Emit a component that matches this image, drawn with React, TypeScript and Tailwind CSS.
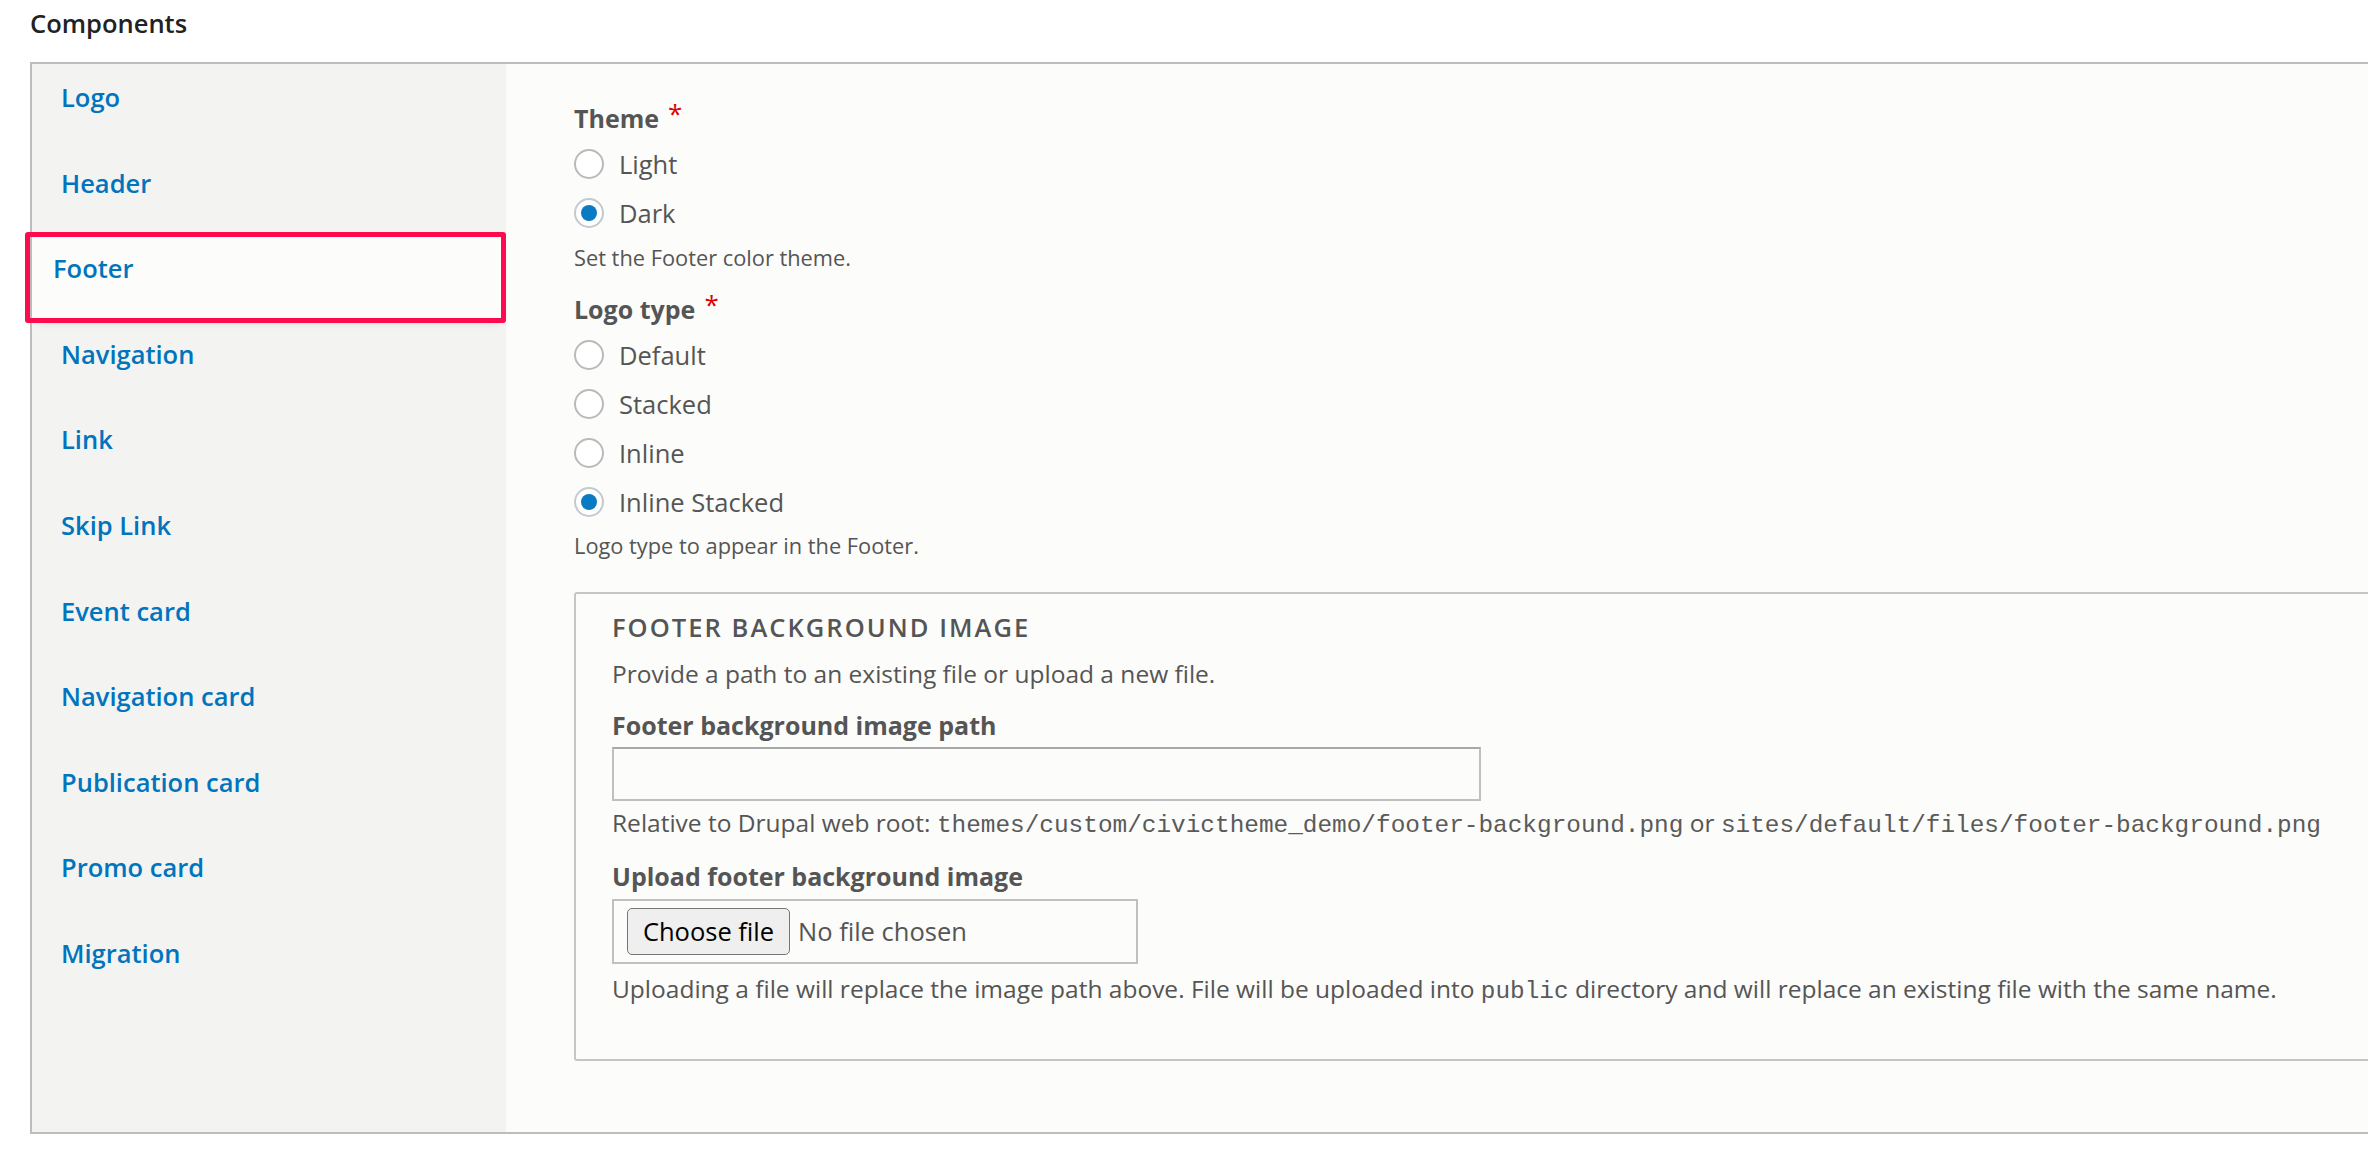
import type { ReactNode } from "react";

const tabs = [
  "Logo",
  "Header",
  "Footer",
  "Navigation",
  "Link",
  "Skip Link",
  "Event card",
  "Navigation card",
  "Publication card",
  "Promo card",
  "Migration",
];

const Radio = ({ checked, label }: { checked?: boolean; label: string }) => (
  <div className="flex h-[49px] items-center gap-[15px]">
    {checked ? (
      <span className="flex h-[30px] w-[30px] items-center justify-center rounded-full border-2 border-[#c3c9d0] bg-white">
        <span className="h-[16px] w-[16px] rounded-full bg-[#0a7bc2]" />
      </span>
    ) : (
      <span className="h-[30px] w-[30px] rounded-full border-2 border-[#bababa] bg-white" />
    )}
    <span className="text-[25.5px] leading-[36px] text-[#555]">{label}</span>
  </div>
);

const Label = ({ children, required }: { children: ReactNode; required?: boolean }) => (
  <div className="flex h-[42px] items-center text-[25px] font-bold leading-[36px] text-[#555]">
    {children}
    {required ? <span className="ml-[9px] -translate-y-[5px] text-[26px] font-normal text-[#e00000]">*</span> : null}
  </div>
);

const Desc = ({ children, big }: { children: ReactNode; big?: boolean }) => (
  <div className={big ? "flex h-[40px] items-center text-[24.5px] leading-[34px] text-[#555]" : "flex h-[40px] items-center text-[21.8px] leading-[32px] text-[#555]"}>
    {children}
  </div>
);

const Mono = ({ children }: { children: ReactNode }) => (
  <code className="font-['Liberation_Mono',monospace] text-[24.4px] text-[#5a5a5a]">{children}</code>
);

export default function App() {
  return (
    <div className="min-h-screen w-full overflow-hidden bg-white pl-[30px] font-['Open_Sans',sans-serif]">
      <h2 className="pt-[5px] text-[25.5px] font-semibold leading-[36px] text-[#222]">Components</h2>

      <div className="mt-[21px] flex w-[2400px] border-2 border-[#bdbdbd] bg-[#fcfcfa]">
        {/* vertical tabs */}
        <ul className="w-[474px] shrink-0 bg-[#f3f3f2]">
          {tabs.map((t) =>
            t === "Footer" ? (
              <li key={t} className="relative h-[85.6px] bg-[#fcfcfa] pl-[21px] pt-[15px] shadow-[0_6px_10px_-6px_rgba(0,0,0,0.15)]">
                <span className="text-[25.5px] font-semibold leading-[36px] text-[#0074bd]">{t}</span>
                <span className="pointer-events-none absolute -bottom-[2px] -left-[7px] right-0 -top-[3px] rounded-[3px] border-[5px] border-[#fd0a4f]" />
              </li>
            ) : (
              <li key={t} className="h-[85.6px] pl-[29px] pt-[15px]">
                <span className="text-[25.5px] font-semibold leading-[36px] text-[#0074bd]">{t}</span>
              </li>
            )
          )}
        </ul>

        {/* panel */}
        <div className="flex-1 pb-[71px] pl-[68px] pt-[33px]">
          <Label required>Theme</Label>
          <Radio label="Light" />
          <Radio checked label="Dark" />
          <div className="mt-[0.5px]">
            <Desc>Set the Footer color theme.</Desc>
          </div>

          <div className="mt-[10.5px]">
            <Label required>Logo type</Label>
          </div>
          <Radio label="Default" />
          <Radio label="Stacked" />
          <Radio label="Inline" />
          <Radio checked label="Inline Stacked" />
          <Desc>Logo type to appear in the Footer.</Desc>

          <fieldset className="mt-[26px] rounded-l-[3px] border-2 border-[#c6c6c6] pb-[49px] pl-[36px] pt-[13px]">
            <div className="flex h-[40px] items-center text-[25.5px] font-semibold uppercase tracking-[0.08em] text-[#555]">
              Footer background image
            </div>
            <div className="mt-[7px]">
              <Desc big>Provide a path to an existing file or upload a new file.</Desc>
            </div>
            <div className="mt-[12px] flex h-[40px] items-center text-[25px] font-bold text-[#555]">
              Footer background image path
            </div>
            <div className="mt-[1px] h-[54px] w-[869px] border-2 border-[#c0c0c0] border-t-[#a8a8a8] bg-[#fcfcfa]" />
            <div className="mt-[3px]">
              <Desc big>
                <span>
                  Relative to Drupal web root: <Mono>themes/custom/civictheme_demo/footer-background.png</Mono> or{" "}
                  <Mono>sites/default/files/footer-background.png</Mono>
                </span>
              </Desc>
            </div>
            <div className="mt-[13px] flex h-[40px] items-center text-[25px] font-bold text-[#555]">
              Upload footer background image
            </div>
            <div className="mt-[2px] flex h-[65px] w-[526px] items-center gap-[8px] border-2 border-[#c0c0c0] pl-[13px]">
              <button className="flex h-[47px] w-[163px] items-center justify-center rounded-[5px] border-[1.5px] border-[#767676] bg-[#efefef] text-[25.5px] text-black">
                Choose file
              </button>
              <span className="text-[25.5px] text-[#555]">No file chosen</span>
            </div>
            <div className="mt-[6px]">
              <Desc big>
                <span>
                  Uploading a file will replace the image path above. File will be uploaded into <Mono>public</Mono>{" "}
                  directory and will replace an existing file with the same name.
                </span>
              </Desc>
            </div>
          </fieldset>
        </div>
      </div>
    </div>
  );
}
